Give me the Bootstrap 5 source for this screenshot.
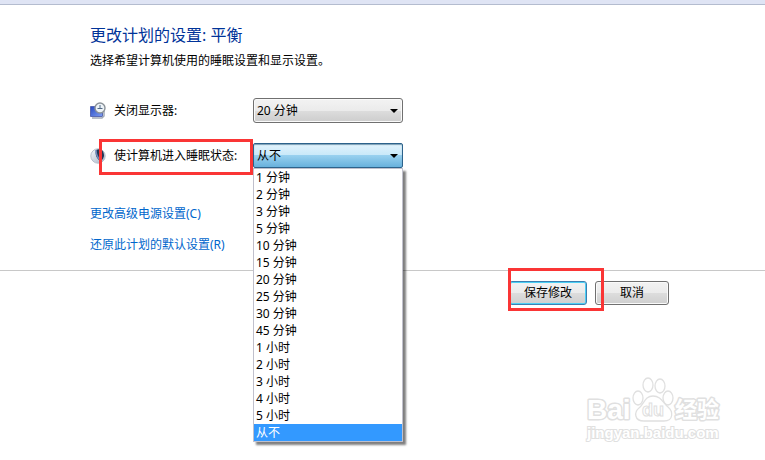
<!DOCTYPE html>
<html lang="zh-CN">
<head>
<meta charset="utf-8">
<meta name="viewport" content="width=device-width, initial-scale=1">
<title>更改计划的设置</title>
<link href="https://cdn.jsdelivr.net/npm/bootstrap@5.3.0/dist/css/bootstrap.min.css" rel="stylesheet">
<style>
body { font: 12px/16px "Noto Sans", "Noto Sans CJK SC", sans-serif; color: #000; background: #fff; }
.window-edge { height: 5px; background: #dfe4f4; border-bottom: 1px solid #b4bccf; }
.plan { padding: 18px 32px 17px 90px; }
.plan-title { font-size: 16px; font-weight: 400; line-height: 24px; color: #039; margin: 0 0 6px; }
.plan-intro { margin: 0 0 29px; }
.setting { margin-bottom: 20px; min-height: 25px; }
.setting-name { width: 163px; }
.setting-name svg { width: 16px; height: 18px; flex: none; }
.combo { width: 150px; }
.combo select { display: block; width: 100%; height: 25px; padding: 0 20px 0 3px; appearance: none; color: #000; border: 1px solid #707070; border-radius: 3px; background: linear-gradient(#f3f3f3, #ebebeb 50%, #ddd 50%, #cdcdcd); box-shadow: inset 0 0 0 1px #fafafa; }
.combo select.opened { border-color: #2c628b; border-radius: 2px; background: linear-gradient(#e2f3fc, #c8e8f9 50%, #98d0ef 50%, #68b1dc); box-shadow: inset 0 1px 1px #7a9eb4; }
.combo::after { content: ""; position: absolute; right: 5px; top: 11px; border: 4px solid transparent; border-top-color: #000; border-bottom: 0; pointer-events: none; }
.options { position: absolute; top: 100%; left: 0; z-index: 3; width: 100%; margin: 0; padding: 0; list-style: none; background: #fff; border: 1px solid #c0c0cc; box-shadow: 3px 3px 2px rgba(0,0,0,.5); }
.options li { height: 17px; line-height: 17px; padding-left: 2px; }
.options .chosen { color: #fff; background: #39f; }
.plan-link { color: #06c; text-decoration: none; }
.links { gap: 15px; margin-top: 38px; }
.actions { border-top: 1px solid #c8c8c8; padding: 10px 96px 0 0; }
.action-set { gap: 8px; }
.push { height: 24px; padding: 0 12px; line-height: 20px; font-size: 12px; color: #000; border: 1px solid #707070; border-radius: 3px; background: linear-gradient(#f2f2f2, #ebebeb 50%, #ddd 50%, #cfcfcf); box-shadow: inset 0 0 0 1px #fafafa; }
.push-save { width: 78px; border-color: #3c7fb1; box-shadow: inset 0 0 0 1px #4dd0f5; }
.push-cancel { width: 74px; }
.callout { position: absolute; border: 3px solid #fa3535; pointer-events: none; z-index: 2; }
.callout-sleep { left: 9px; right: 0; top: -4px; height: 36px; }
.callout-save { left: -1px; top: -13px; width: 96px; height: 43px; }
.watermark { position: absolute; right: 39px; bottom: 12px; width: 142px; height: 74px; }
</style>
<script src="https://cdn.jsdelivr.net/npm/bootstrap@5.3.0/dist/js/bootstrap.bundle.min.js"></script>
</head>
<body class="position-relative min-vh-100">
<div class="window-edge"></div>
<main>
  <section class="plan">
    <h1 class="plan-title">更改计划的设置: 平衡</h1>
    <p class="plan-intro">选择希望计算机使用的睡眠设置和显示设置。</p>
    <div class="setting d-flex">
      <label class="setting-name d-flex align-items-center gap-2" for="display-off">
        <svg viewBox="0 0 16 18" aria-hidden="true"><defs><linearGradient id="scr" x2="1" y2="1"><stop stop-color="#2848c0"/><stop offset="1" stop-color="#7ea0f4"/></linearGradient></defs><path d="M.5 4.500h12v10H.5z" fill="url(#scr)" stroke="#5a6ab4"/><path d="M2 16h10l2-2V9" fill="none" stroke="#a3abb8" stroke-width="1.500"/><circle cx="10" cy="6" r="5" fill="#edf3f8" stroke="#8b9298" stroke-width="1.400"/><path d="M10 3v3.500h2.500M7.500 6.500H10" fill="none" stroke="#536a85"/></svg>
        <span>关闭显示器:</span>
      </label>
      <div class="combo position-relative"><select id="display-off"><option>20 分钟</option></select></div>
    </div>
    <div class="setting d-flex">
      <label class="setting-name position-relative d-flex align-items-center gap-2" for="sleep-after">
        <svg viewBox="0 0 16 18" aria-hidden="true"><defs><linearGradient id="orb" x2="1" y2="1"><stop stop-color="#f8faff"/><stop offset="1" stop-color="#a3b1c4"/></linearGradient></defs><circle cx="8" cy="9" r="7.2" fill="url(#orb)" stroke="#b5bfcc"/><path d="M6 3c5-2 8 1 8 6-1 4-3 5-4 5C6 11 5 7 6 3z" fill="#253654"/><path d="M6 3c0 4 1 7 4 10" fill="none" stroke="#708bbd" stroke-width="1.5"/></svg>
        <span>使计算机进入睡眠状态:</span>
        <span class="callout callout-sleep"></span>
      </label>
      <div class="combo position-relative">
        <select id="sleep-after" class="opened"><option>从不</option></select>
        <ul class="options" role="listbox" aria-label="使计算机进入睡眠状态">
          <li role="option">1 分钟</li><li role="option">2 分钟</li><li role="option">3 分钟</li><li role="option">5 分钟</li>
          <li role="option">10 分钟</li><li role="option">15 分钟</li><li role="option">20 分钟</li><li role="option">25 分钟</li>
          <li role="option">30 分钟</li><li role="option">45 分钟</li><li role="option">1 小时</li><li role="option">2 小时</li>
          <li role="option">3 小时</li><li role="option">4 小时</li><li role="option">5 小时</li><li role="option" class="chosen" aria-selected="true">从不</li>
        </ul>
      </div>
    </div>
    <nav class="links d-flex flex-column align-items-start">
      <a class="plan-link" href="#advanced">更改高级电源设置(C)</a>
      <a class="plan-link" href="#restore">还原此计划的默认设置(R)</a>
    </nav>
  </section>
  <div class="actions d-flex justify-content-end">
    <div class="action-set position-relative d-flex">
      <button type="button" class="push push-save">保存修改</button>
      <button type="button" class="push push-cancel">取消</button>
      <span class="callout callout-save"></span>
    </div>
  </div>
</main>
<svg class="watermark" viewBox="0 0 142 74" role="img" aria-label="Baidu 经验">
  <g fill="#fff" stroke="#e0e0e0" stroke-width="1.3">
    <g font-family="Liberation Sans, sans-serif" font-weight="700" paint-order="stroke" stroke-width="3" stroke-linejoin="round">
      <text x="3" y="45" font-size="28">Bai</text>
      <text x="91" y="43" font-size="22" font-family="Noto Sans CJK SC, sans-serif">经验</text>
    </g>
    <ellipse cx="54" cy="24" rx="5" ry="7"/><ellipse cx="64" cy="11" rx="5" ry="7"/><ellipse cx="76" cy="12" rx="5" ry="7"/><ellipse cx="84" cy="24" rx="5" ry="7"/>
    <path d="M69 22c-8 0-9 8-14 12-5 4-5 13 5 13h20c10 0 9-10 4-14-5-4-7-11-15-11z"/>
    <text x="58" y="42" font-family="Liberation Sans, sans-serif" font-size="18" font-weight="700" stroke-width="1">du</text>
    <text x="3" y="64" font-family="Liberation Sans, sans-serif" font-size="15" font-weight="700" paint-order="stroke" stroke-width="2">jingyan.baidu.com</text>
  </g>
</svg>
</body>
</html>
